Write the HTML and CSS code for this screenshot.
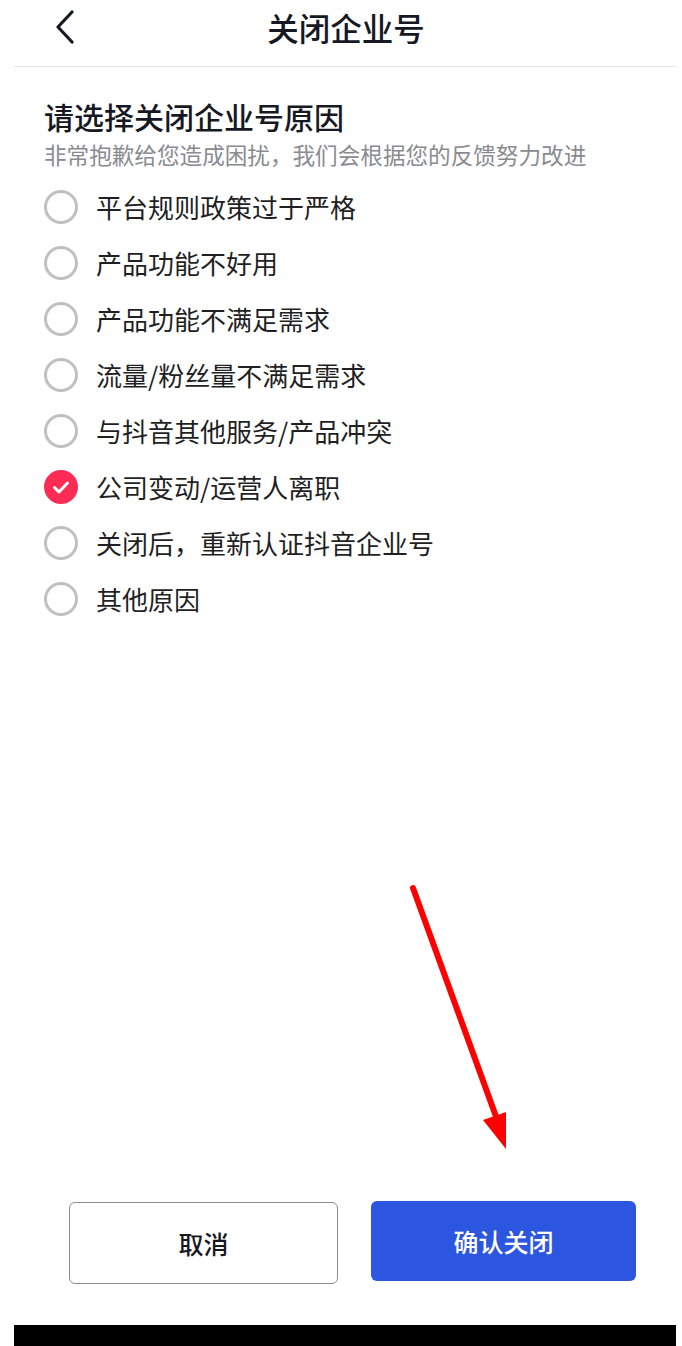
FILE: index.html
```html
<!DOCTYPE html>
<html lang="zh-CN">
<head>
<meta charset="utf-8">
<title>关闭企业号</title>
<link rel="stylesheet" href="styles.css">
</head>
<body>
<div class="page">
  <header class="topbar">
    <div class="topbar-row">
      <span class="back">
        <svg width="20" height="34" viewBox="0 0 20 34"><path d="M16 2 L2 17 L16 32" fill="none" stroke="#161823" stroke-width="3.2" stroke-linecap="round" stroke-linejoin="round"/></svg>
      </span>
      <h1 class="topbar-title">关闭企业号</h1>
    </div>
  </header>

  <main class="content">
    <h2 class="heading">请选择关闭企业号原因</h2>
    <p class="sub">非常抱歉给您造成困扰，我们会根据您的反馈努力改进</p>
    <ul class="options">
      <li class="option"><span class="radio"></span><span class="label">平台规则政策过于严格</span></li>
      <li class="option"><span class="radio"></span><span class="label">产品功能不好用</span></li>
      <li class="option"><span class="radio"></span><span class="label">产品功能不满足需求</span></li>
      <li class="option"><span class="radio"></span><span class="label">流量/粉丝量不满足需求</span></li>
      <li class="option"><span class="radio"></span><span class="label">与抖音其他服务/产品冲突</span></li>
      <li class="option"><span class="radio checked"><svg width="34" height="34" viewBox="0 0 34 34"><path d="M10.5 17.5 L15 22 L23.5 13" fill="none" stroke="#fff" stroke-width="3" stroke-linecap="round" stroke-linejoin="round"/></svg></span><span class="label">公司变动/运营人离职</span></li>
      <li class="option"><span class="radio"></span><span class="label">关闭后，重新认证抖音企业号</span></li>
      <li class="option"><span class="radio"></span><span class="label">其他原因</span></li>
    </ul>
  </main>

  <footer class="footer">
    <div class="actions">
      <button class="btn btn-cancel">取消</button>
      <button class="btn btn-confirm">确认关闭</button>
    </div>
    <div class="homebar"></div>
  </footer>

  <svg class="annot-arrow" width="120" height="290" viewBox="400 870 120 290">
    <line x1="413" y1="888" x2="498" y2="1122" stroke="#ff0000" stroke-width="6" stroke-linecap="round"/>
    <polygon points="483,1120 506,1112 506,1149" fill="#ff0000"/>
  </svg>
</div>
</body>
</html>
```
FILE: styles.css
```css
* { box-sizing: border-box; }
html, body { margin: 0; padding: 0; background: #fff; }
body {
  font-family: "Noto Sans CJK SC", "Noto Sans", "Liberation Sans", sans-serif;
  color: #161823;
}
.page {
  position: relative;
  width: 682px;
  min-height: 1346px;
  display: flex;
  flex-direction: column;
}
.topbar {
  margin: 0 6px 0 14px;
  height: 67px;
  border-bottom: 1px solid #e8e8e8;
}
.topbar-row {
  position: relative;
  height: 54px;
  display: flex;
  align-items: center;
  justify-content: center;
}
.back {
  position: absolute;
  left: 42px;
  top: 10px;
  width: 20px;
  height: 34px;
  display: flex;
}
.topbar-title {
  margin: 0;
  padding-left: 2px;
  font-size: 31.5px;
  font-weight: 500;
  line-height: 40px;
  color: #161823;
}
.content {
  padding: 0 44px;
}
.heading {
  margin: 30px 0 0;
  font-size: 30px;
  font-weight: 500;
  line-height: 38px;
  color: #161823;
}
.sub {
  margin: 5px 0 0;
  font-size: 22.6px;
  line-height: 30px;
  color: #8a8b91;
}
.options {
  list-style: none;
  margin: 9px 0 0;
  padding: 0;
}
.option {
  height: 56px;
  display: flex;
  align-items: center;
  gap: 18px;
}
.radio {
  width: 34px;
  height: 34px;
  border-radius: 50%;
  border: 3px solid #c0c0c2;
  flex: none;
  display: flex;
}
.radio.checked {
  border: none;
  background: #fe2c55;
}
.label {
  font-size: 26px;
  line-height: 34px;
  color: #1f1f24;
}
.footer {
  margin-top: auto;
}
.actions {
  display: flex;
  align-items: flex-start;
  gap: 33px;
  padding-left: 69px;
  margin-bottom: 41px;
  height: 82px;
}
.btn {
  font-family: inherit;
  font-size: 25px;
  font-weight: 500;
  border-radius: 6px;
  padding: 0;
  cursor: pointer;
}
.btn-cancel {
  width: 269px;
  height: 82px;
  background: #fff;
  border: 1.5px solid #8c8c8c;
  color: #161823;
}
.btn-confirm {
  width: 265px;
  height: 80px;
  margin-top: -1px;
  background: #2d56e0;
  border: none;
  color: #fff;
}
.homebar {
  height: 21px;
  margin: 0 6px 0 14px;
  background: #000;
}
.annot-arrow {
  position: absolute;
  left: 400px;
  top: 870px;
  pointer-events: none;
}
```
